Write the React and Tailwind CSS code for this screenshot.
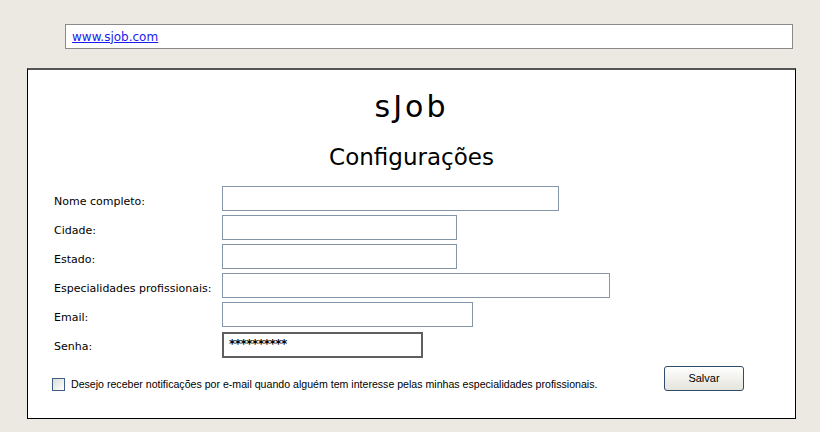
export default function App() {
  const comic = { fontFamily: '"Comic Sans MS", "DejaVu Sans", sans-serif' };
  const rows = [
    { label: "Nome completo:", w: 337 },
    { label: "Cidade:", w: 235 },
    { label: "Estado:", w: 235 },
    { label: "Especialidades profissionais:", w: 388 },
    { label: "Email:", w: 251 },
  ];
  return (
    <div className="w-[820px] h-[432px] bg-[#ECE9E3] pt-[24px] overflow-hidden">
      <div className="ml-[65px] w-[728px] h-[25px] border border-[#8a8a8a] bg-white flex items-center pl-[6px]">
        <span className="text-[12px] text-[#1a1aee] underline leading-none" style={{ fontFamily: '"DejaVu Sans", sans-serif' }}>
          www.sjob.com
        </span>
      </div>
      <div className="mt-[19px] ml-[27px] w-[769px] h-[351px] bg-white border border-black border-t-2 border-t-[#555] flex flex-col">
        <div className="pt-[19px] text-center text-[30px] leading-[36px] tracking-[3px] text-black" style={comic}>sJob</div>
        <div className="mt-[16px] text-center text-[23px] leading-[32px] text-black" style={comic}>Configurações</div>
        <div className="mt-[13px] flex flex-col gap-[4px]">
          {rows.map((r) => (
            <div key={r.label} className="flex items-center h-[25px]">
              <div className="w-[194px] pl-[26px] pt-[7px] text-[11px] text-black whitespace-nowrap" style={comic}>{r.label}</div>
              <div className="h-[25px] border border-[#8596a8] bg-white" style={{ width: r.w }} />
            </div>
          ))}
          <div className="flex items-center h-[26px] mt-[1px]">
            <div className="w-[194px] pl-[26px] pt-[4px] text-[11px] text-black" style={comic}>Senha:</div>
            <div className="h-[26px] w-[201px] border-2 border-[#5f5f5f] bg-white pl-[5px] pt-[3px] text-[12px] leading-[14px] font-bold tracking-[-0.5px]" style={{ fontFamily: '"DejaVu Sans", sans-serif' }}>
              **********
            </div>
          </div>
        </div>
        <div className="mt-[8px] flex items-start pl-[24px] pr-[51px]">
          <div className="mt-[12px] flex items-center">
            <div className="w-[13px] h-[13px] border border-[#3f5d8a] bg-gradient-to-br from-[#dcdcd6] to-white" />
            <span className="ml-[6px] text-[10.6px] leading-[13px] text-black whitespace-nowrap" style={{ fontFamily: '"Liberation Sans", sans-serif' }}>
              Desejo receber notificações por e-mail quando alguém tem interesse pelas minhas especialidades profissionais.
            </span>
          </div>
          <div className="ml-auto w-[80px] h-[25px] rounded-[3px] border border-[#2f4d6b] bg-gradient-to-b from-white to-[#e4e3dc] flex items-center justify-center text-[11px] text-black" style={{ fontFamily: '"Liberation Sans", sans-serif' }}>
            Salvar
          </div>
        </div>
      </div>
    </div>
  );
}
